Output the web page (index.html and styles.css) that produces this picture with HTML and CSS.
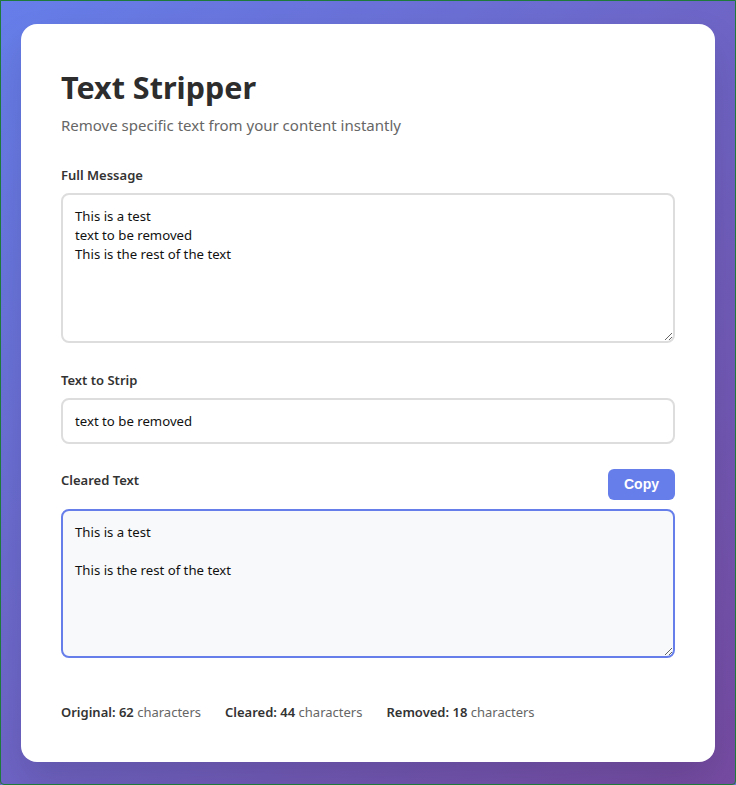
FILE: index.html
```html
<!DOCTYPE html>
<html lang="en">
<head>
<meta charset="utf-8">
<title>Text Stripper</title>
<link rel="stylesheet" href="styles.css">
</head>
<body>
<main class="card">
  <h1 class="title">Text Stripper</h1>
  <p class="subtitle">Remove specific text from your content instantly</p>

  <div class="field field-area">
    <label class="label" for="full">Full Message</label>
    <textarea id="full" class="textbox">This is a test
text to be removed
This is the rest of the text</textarea>
  </div>

  <div class="field">
    <label class="label" for="strip">Text to Strip</label>
    <input id="strip" class="textbox input" type="text" value="text to be removed">
  </div>

  <div class="field">
    <div class="output-head">
      <label class="label" for="out">Cleared Text</label>
      <button class="copy" type="button">Copy</button>
    </div>
    <textarea id="out" class="textbox output" readonly>This is a test

This is the rest of the text</textarea>
  </div>

  <div class="stats">
    <span class="stat"><strong>Original:</strong> <b>62</b> characters</span>
    <span class="stat"><strong>Cleared:</strong> <b>44</b> characters</span>
    <span class="stat"><strong>Removed:</strong> <b>18</b> characters</span>
  </div>
</main>
</body>
</html>
```

FILE: styles.css
```css
* { box-sizing: border-box; }

html {
  border: 1px solid #1d7a3b;
  border-radius: 0 0 4px 4px;
  min-height: 100vh;
}

body {
  margin: 0;
  padding: 20px;
  min-height: calc(100vh - 2px);
  display: flex;
  align-items: center;
  justify-content: center;
  background: linear-gradient(135deg, #667eea 0%, #764ba2 100%);
  font-family: "Segoe UI", "Noto Sans", "Open Sans", sans-serif;
  color: #333;
}

.card {
  width: 100%;
  background: #fff;
  border-radius: 16px;
  padding: 40px;
  box-shadow: 0 20px 40px rgba(0, 0, 0, 0.12);
}

.title {
  margin: 0 0 6px;
  padding-top: 2px;
  font-size: 30.5px;
  font-weight: 700;
  line-height: 43px;
  color: #2d2d2d;
}

.subtitle {
  margin: 0 0 30px;
  font-size: 15px;
  line-height: 21px;
  color: #666;
}

.field { margin-bottom: 25px; }
.field-area { margin-bottom: 28px; }

.label {
  display: block;
  margin-bottom: 8px;
  font-size: 13px;
  line-height: 19px;
  font-weight: 600;
  color: #333;
}

.textbox {
  display: block;
  width: 100%;
  padding: 12px;
  border: 2px solid #ddd;
  border-radius: 8px;
  font-family: inherit;
  font-size: 13.2px;
  line-height: 19px;
  color: #111;
  background: #fff;
  outline: none;
}

textarea.textbox {
  height: 150px;
  resize: vertical;
}

.input { height: 46px; }

.output-head {
  display: flex;
  align-items: center;
  justify-content: space-between;
  margin-bottom: 9px;
}

.copy {
  height: 31px;
  padding: 0 16px;
  border: none;
  border-radius: 6px;
  background: #667eea;
  color: #fff;
  font-family: "Liberation Sans", Arial, sans-serif;
  font-size: 14px;
  font-weight: 700;
  line-height: 31px;
}

textarea.output {
  height: 149px;
  border-color: #667eea;
  background: #f8f9fa;
}

.stats {
  display: flex;
  gap: 24px;
  margin-top: 45px;
  font-size: 13px;
  line-height: 19px;
  color: #666;
}

.stat strong, .stat b {
  font-weight: 600;
  color: #333;
}
```
